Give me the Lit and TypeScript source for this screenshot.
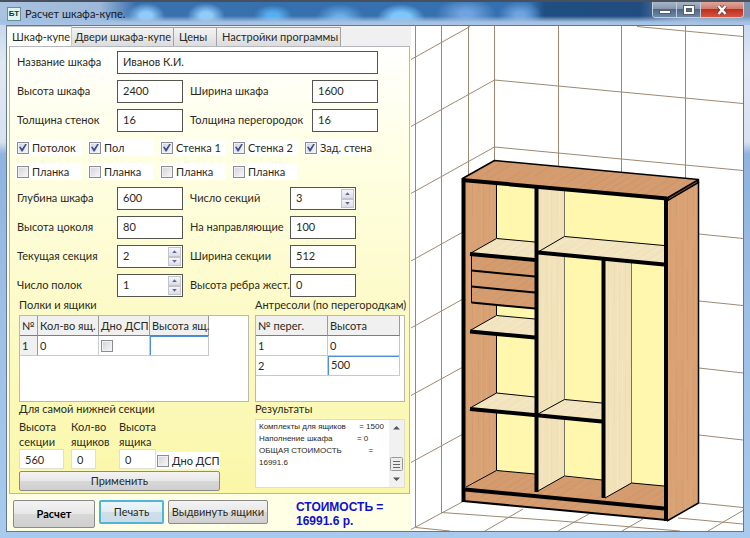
import { LitElement, html, css, svg } from "lit";
import { customElement, property } from "lit/decorators.js";
import { classMap } from "lit/directives/class-map.js";

const controls = css`
  * { box-sizing: border-box; }
  input, button, textarea { font: inherit; color: inherit; margin: 0; border-radius: 0; }
  .tick {
    appearance: none; flex: none; width: 12px; height: 12px;
    border: 1px solid #8b8d90; background: linear-gradient(135deg, #cfd3d8, #f8f8f8);
    box-shadow: inset 0 0 0 1px #f1f1f1; display: grid; place-items: center;
  }
  .tick:checked::before {
    content: ""; width: 8px; height: 8px; background: #3b4c9b;
    clip-path: polygon(0 45%, 18% 38%, 38% 66%, 82% 0, 100% 4%, 46% 100%, 32% 100%);
  }
  .check {
    display: flex; align-items: center; gap: 3px; height: 17px;
    padding-left: 1px; background: #fff; white-space: nowrap;
  }
`;

@customElement("spin-box")
class SpinBox extends LitElement {
  static styles = [controls, css`
    :host { display: block; }
    .box { display: flex; height: 23px; border: 1px solid #55554f; background: #fff; }
    .value { flex: 1; width: 0; border: 0; padding: 0 5px 2px; outline: 0; background: none; }
    .steps { flex: none; display: flex; flex-direction: column; width: 15px; padding: 1px; }
    .step {
      flex: 1; padding: 0; border: 1px solid #c3c3cc; background: linear-gradient(#f6f6f8, #dcdce4);
      display: grid; place-items: center;
    }
    .step::before { content: ""; width: 5px; height: 3px; background: #5767a5; clip-path: polygon(50% 0, 100% 100%, 0 100%); }
    .down::before { clip-path: polygon(0 0, 100% 0, 50% 100%); }
  `];
  @property() value = "";
  @property() label = "";
  render() {
    return html`<div class="box">
      <input class="value" type="text" aria-label=${this.label} .value=${this.value}>
      <span class="steps">
        <button class="step" aria-label="+"></button>
        <button class="step down" aria-label="−"></button>
      </span>
    </div>`;
  }
}

type Pt = [number, number];
const pts = (p: Pt[]) => p.map((q) => q.join(",")).join(" ");

const gridLines: [number, number, number, number][] = [
  [415.5, 26, 415.5, 527], [441.5, 26, 441.5, 513], [468.5, 26, 468.5, 180], [494.5, 26, 494.5, 165],
  [558.5, 26, 558.5, 170], [621.5, 26, 621.5, 175], [685.5, 26, 685.5, 182],
  [411, 59.5, 470, 26.5], [411, 126.5, 494.5, 80], [411, 193.5, 494.5, 147],
  [411, 261, 463, 232], [411, 328, 463, 299], [411, 395.5, 463, 367], [411, 462.5, 463, 434], [411, 529.5, 463, 501.5],
  [637, 26.5, 743, 36.5], [494.5, 80, 743, 103.5], [494.5, 147, 743, 170.5],
  [699, 234, 743, 238.5], [699, 301, 743, 305.5], [699, 368, 743, 373], [699, 435, 743, 440], [699, 503, 743, 507.5],
  [441.5, 512.5, 560, 521], [560, 521, 680, 531], [678, 518, 743, 524], [415.5, 527.5, 450, 531],
  [523, 509, 485, 531], [589, 514, 558, 531], [643, 519, 622, 531], [743, 510.5, 708, 531],
];

const faces: { cls: string; p: Pt[] }[] = [
  { cls: "back", p: [[496.5, 180], [666, 198], [666, 488], [496.5, 471]] },
  { cls: "wood", p: [[466, 487], [496.5, 470.5], [664, 486], [664, 508], [466, 490]] },
  { cls: "side", p: [[465, 181], [496.5, 184], [496.5, 470.5], [465, 487]] },
  { cls: "pale", p: [[538, 187], [564.5, 190], [564.5, 476], [538, 491]] },
  { cls: "pale", p: [[605, 259], [631.5, 261], [631.5, 483], [605, 498]] },
  { cls: "shelf", p: [[471, 253], [496.5, 238.5], [535, 242], [535, 259]] },
  { cls: "shelf", p: [[471, 330], [496.5, 315.5], [535, 319], [535, 336]] },
  { cls: "shelf", p: [[471, 407.5], [496.5, 393], [535, 397], [535, 413]] },
  { cls: "shelf", p: [[538, 252], [564.5, 236.5], [664, 245.5], [664, 264]] },
  { cls: "shelf", p: [[538, 414], [564.5, 399.5], [602, 403], [602, 420]] },
  { cls: "wood", p: [[471.5, 256], [535, 262], [535, 309], [471.5, 303]] },
  { cls: "wood", p: [[462.5, 178.5], [494.5, 160.5], [698.5, 179.5], [667, 198.5]] },
  { cls: "side", p: [[668, 199], [698.5, 181], [698.5, 503], [668, 520.5]] },
  { cls: "wood", p: [[465, 491], [664, 510], [664, 519], [465, 501]] },
];

const edges: { w: number; p: Pt[] }[] = [
  { w: 1, p: [[496.5, 184], [496.5, 238]] }, { w: 1, p: [[496.5, 306], [496.5, 315]] },
  { w: 1, p: [[496.5, 336], [496.5, 393]] }, { w: 1, p: [[496.5, 413], [496.5, 470]] },
  { w: 1, p: [[466, 487], [496.5, 470.5], [535, 474]] },
  { w: 1, p: [[538, 491], [564.5, 476], [602, 480]] },
  { w: 1, p: [[605, 498], [631.5, 483], [664, 486]] },
  { w: 1, p: [[471, 253], [496.5, 238.5], [535, 242]] },
  { w: 1, p: [[471, 330], [496.5, 315.5], [535, 319]] },
  { w: 1, p: [[471, 407.5], [496.5, 393], [535, 397]] },
  { w: 1, p: [[538, 252], [564.5, 236.5], [664, 245.5]] },
  { w: 1, p: [[538, 414], [564.5, 399.5], [602, 403]] },
  { w: 1, p: [[471.5, 256], [471.5, 303]] },
  { w: 2, p: [[471.5, 270.5], [535, 276.5]] }, { w: 2, p: [[471.5, 286.5], [535, 292.5]] }, { w: 2, p: [[471.5, 302.5], [535, 308.5]] },
  { w: 4, p: [[470, 254], [535, 260]] }, { w: 4, p: [[470, 331.5], [535, 337.5]] },
  { w: 4, p: [[470, 409], [602, 421.5]] }, { w: 4, p: [[538, 252.5], [664, 264.5]] },
  { w: 1.5, p: [[462.5, 178.5], [494.5, 160.5], [698.5, 179.5], [698.5, 503], [667, 521]] },
  { w: 4, p: [[666, 200], [698.5, 181]] },
  { w: 2, p: [[463, 501], [667, 520]] },
  { w: 4, p: [[465, 489.5], [664, 508.5]] },
  { w: 4, p: [[462, 180], [667, 198.5]] },
  { w: 4, p: [[463.5, 178], [463.5, 502]] },
  { w: 4, p: [[536.5, 187], [536.5, 492]] },
  { w: 4, p: [[603.5, 259], [603.5, 498]] },
  { w: 4, p: [[666, 198], [666, 521]] },
];

@customElement("wardrobe-view")
class WardrobeView extends LitElement {
  static styles = css`
    :host { display: block; background: #fff; overflow: hidden; }
    .view { display: block; width: 100%; height: auto; }
    .grid { stroke: #9d8972; stroke-width: 1; }
    .thin { stroke: #777265; stroke-width: 1; }
    .inner { stroke: #7a5238; stroke-width: 1; }
    .edge { fill: none; stroke: #000; stroke-linejoin: round; }
    .back { fill: #fff7ae; }
    .wood { fill: url(#wood); }
    .side { fill: url(#side); }
    .pale { fill: url(#pale); }
    .shelf { fill: url(#shelf); }
  `;
  private grain(id: string, base: string, dark: string, light: string, turn: number) {
    return svg`<pattern id=${id} width="17" height="120" patternUnits="userSpaceOnUse" patternTransform=${`rotate(${turn})`}>
      <rect width="17" height="120" fill=${base}></rect>
      <path d="M2.5 0V70M7.5 30V120M13.5 10V96" stroke=${dark} stroke-opacity=".4"></path>
      <path d="M5.5 0V120M10.5 0V60M15.5 50V120" stroke=${light} stroke-opacity=".5"></path>
    </pattern>`;
  }
  render() {
    return html`<svg class="view" viewBox="411 26 332 505" role="img" aria-label="Шкаф-купе">
      <defs>
        ${this.grain("wood", "#d39b6e", "#c58d60", "#d9a377", 58)}
        ${this.grain("side", "#d9a274", "#cd9668", "#dfaa7e", 0)}
        ${this.grain("pale", "#f1e2ba", "#e8d7ad", "#f6eac8", 0)}
        ${this.grain("shelf", "#f2e4bf", "#e9d9b1", "#f8edcf", 58)}
      </defs>
      ${gridLines.map(([a, b, c, d]) => svg`<line class="grid" x1=${a} y1=${b} x2=${c} y2=${d}></line>`)}
      ${faces.map((f) => svg`<polygon class=${f.cls} points=${pts(f.p)}></polygon>`)}
      <path class="thin" d="M564.5 190V236M564.5 256V399M564.5 418V476M631.5 262V483"></path>
      ${edges.map((e) => svg`<polyline class="edge" stroke-width=${e.w} points=${pts(e.p)}></polyline>`)}
      <path class="inner" d="M669 198.500L697 182"></path>
    </svg>`;
  }
}

@customElement("app-root")
class AppRoot extends LitElement {
  static styles = [controls, css`
    :host {
      display: block; font: 11px/16px Lato, "Open Sans", sans-serif; color: #2a2a22;
    }
    .window {
      min-height: 100vh; display: flex; flex-direction: column; padding: 0 6px 6px;
      background: linear-gradient(#b9cfe8, #dfe8f3 60px, #d8e2ef 140px, #8fb2df 152px, #9fc0e6 60%, #a9caef);
      border-top: 2px solid #46505f; border-bottom: 1px solid #39485a;
    }
    .title {
      display: flex; align-items: center; height: 23px; margin: 0 -6px; padding-left: 7px; gap: 4px; color: #151c26;
      background:
        linear-gradient(transparent 14px, #a3c0e2 20px, #a9c5e6),
        radial-gradient(ellipse 19px 13px at 146px 14px, #8fccfb 30%, transparent),
        radial-gradient(ellipse 19px 13px at 206px 14px, #8fccfb 30%, transparent),
        radial-gradient(ellipse 19px 11px at 273px 14px, #55aef0 30%, transparent),
        radial-gradient(ellipse 24px 14px at 340px 16px, #6aaee9 20%, transparent),
        radial-gradient(ellipse 24px 14px at 401px 16px, #7cc6fb 40%, transparent),
        radial-gradient(ellipse 30px 16px at 466px 12px, #6fa3df 20%, transparent),
        radial-gradient(ellipse 22px 14px at 520px 13px, #6fa3df 20%, transparent),
        linear-gradient(90deg, #a9c3e0, #9db8d8 100px, #3a70ae 136px, #3470b0 530px, #1f4e80 545px, #214c7f 640px, #8ea3bd 690px, #7c92ae);
    }
    .logo {
      width: 14px; height: 14px; border: 1px solid #6d8f94; background: #dff3ef; color: #16352f;
      font: bold 8px/12px "Liberation Sans", sans-serif; text-align: center;
    }
    .name { flex: 1; margin: 0; font: inherit; }
    .caption { display: flex; align-self: flex-start; margin-right: 6px; border: 1px solid #c3cedb; border-top: 0; border-radius: 0 0 4px 4px; overflow: hidden; }
    .cap { width: 24px; height: 15px; padding: 0; border: 0; border-right: 1px solid #c3cedb; display: grid; place-items: center; background: linear-gradient(#a9b6c7, #8395ad 48%, #4f6788 50%, #7088a8); }
    .close { width: 42px; border: 0; background: linear-gradient(#e0a79c, #d2776a 48%, #bd2f20 50%, #d4553f); }
    .capicon { display: block; width: 14px; height: 12px; }
    .client {
      flex: 1; display: grid; grid-template-columns: minmax(404px, 54%) 1fr; border: 1px solid #66788e; background: #fff;
    }
    .panel { display: flex; flex-direction: column; background: #ffffe6; }
    .tabs { display: flex; height: 20px; background: #f0f0f0; align-items: flex-end; }
    .tab {
      height: 19px; padding: 0 3px; border: 1px solid #a2a2a2; border-left: 0; border-bottom: 0; text-align: left;
      background: linear-gradient(#f3f3f3, #dcdcdc); white-space: nowrap; line-height: 16px;
    }
    .t1 { width: 102px; } .t2 { width: 43px; padding-left: 5px; } .t3 { width: 124px; padding-left: 5px; }
    .t0 { width: 65px; height: 20px; padding-left: 5px; background: #fff; border-color: #c6c6c6; }
    .page {
      margin: 0 1px 0 2px; padding: 4px 4px 2px 7px; border: 1px solid #b5b7bd; flex: none;
      display: flex; flex-direction: column; gap: 6px; background: linear-gradient(#fff, #ffffe4 25%, #fcfac6 60%, #faf7a8);
    }
    .row { display: flex; align-items: center; height: 23px; }
    .lab { width: 100px; padding-bottom: 2px; white-space: nowrap; }
    .second { margin-left: 7px; }
    .wide { width: 122px; }
    .field { width: 66px; height: 23px; padding: 0 5px 2px; border: 1px solid #55554f; background: #fff; outline: 0; }
    .long { width: 261px; }
    .spin { width: 66px; }
    .checks { display: grid; grid-template-columns: repeat(5, 65px); gap: 7px; padding: 1px 0; margin-left: -1px; }
    .lower { display: grid; grid-template-columns: 230px 150px; column-gap: 6px; margin: -5px 0 0 2px; }
    .head { height: 17px; margin: 0; font: inherit; line-height: 14px; white-space: nowrap; }
    .right { text-align: right; }
    .frame { height: 87px; border: 1px solid #b9b9ae; background: #fff; }
    .data { border-collapse: separate; border-spacing: 0; table-layout: fixed; }
    .shelves { width: 189px; } .lofts { width: 144px; }
    .data th, .data td { height: 20px; padding: 0 2px; font-weight: normal; text-align: left; border-right: 1px solid #c9c9c9; border-bottom: 1px solid #c9c9c9; white-space: nowrap; line-height: 16px; }
    .data th { background: #f0f0f0; border-bottom-color: #7d7d7d; border-right-color: #9a9a9a; }
    .data td.num { background: #f0f0f0; border-right-color: #9a9a9a; }
    .data td.active { padding: 0; box-shadow: inset 1px 1px #4f8fd9; }
    .data .tick { display: grid; }
    .cell { display: block; width: 100%; height: 18px; padding: 0 3px 2px; border: 0; outline: 0; background: none; }
    .c18 { width: 18px; } .c61 { width: 61px; } .c51 { width: 51px; } .c59 { width: 59px; } .c72 { width: 72px; }
    .bottom { display: grid; grid-template-columns: 52px 48px 37px auto; align-items: end; row-gap: 2px; width: 199px; }
    .item { display: block; line-height: 15px; }
    .small { display: block; height: 20px; padding: 0 5px; border: 1px solid #e0e0d0; background: #fff; outline: 0; }
    .w45 { width: 45px; } .w25 { width: 25px; } .w37 { width: 37px; }
    .btn { border: 1px solid #8a8a8a; border-radius: 2px; background: linear-gradient(#f3f3f3, #e8e8e8 48%, #d8d8d8 52%, #cfcfcf); padding: 0; height: 24px; white-space: nowrap; }
    .apply { grid-column: 1 / -1; height: 20px; line-height: 16px; }
    .results { display: flex; height: 69px; border: 1px solid #dedecb; background: #fff; }
    .log { flex: 1; width: 0; border: 0; padding: 1px 3px; resize: none; overflow: hidden; outline: 0; background: none; font: 8px/12px "Liberation Sans", sans-serif; white-space: pre; }
    .bar { width: 15px; background: #f1f1f1; display: block; }
    .foot { flex: 1; display: flex; align-items: flex-start; padding: 6px 6px 3px; gap: 4px; }
    .calc { width: 82px; height: 28px; font-weight: bold; color: #000; }
    .print { width: 65px; border: 2px solid #4fb6d8; background: linear-gradient(#eef5f9, #e2edf3 48%, #cfdfe9 52%, #cbdce6); }
    .pull { width: 100px; }
    .cost { margin: 0 0 0 24px; font: bold 12px/14px "Liberation Sans", sans-serif; color: #1010d0; white-space: pre; }
  `];

  private field(id: string, label: string, value: string, o: { spin?: boolean; second?: boolean; wide?: boolean; long?: boolean } = {}) {
    return html`<label class=${classMap({ lab: true, second: !!o.second, wide: !!o.wide })} for=${id}>${label}</label>
      ${o.spin
        ? html`<spin-box class="spin" id=${id} .value=${value} .label=${label}></spin-box>`
        : html`<input class=${classMap({ field: true, long: !!o.long })} id=${id} type="text" .value=${value}>`}`;
  }
  private check(label: string, on = false) {
    return html`<label class="check"><input class="tick" type="checkbox" .checked=${on}>${label}</label>`;
  }
  render() {
    return html`<main class="window">
      <header class="title">
        <span class="logo">БТ</span>
        <h1 class="name">Расчет шкафа-купе.</h1>
        <div class="caption">
          <button class="cap" aria-label="Свернуть"><svg class="capicon" viewBox="0 0 14 12"><rect x="1.500" y="6.500" width="11" height="3" fill="#fff" stroke="#53606f"></rect></svg></button>
          <button class="cap" aria-label="Развернуть"><svg class="capicon" viewBox="0 0 14 12"><rect x="3" y="3" width="8" height="6" fill="none" stroke="#53606f" stroke-width="4"></rect><rect x="3" y="3" width="8" height="6" fill="none" stroke="#fff" stroke-width="2"></rect></svg></button>
          <button class="cap close" aria-label="Закрыть"><svg class="capicon" viewBox="0 0 14 12"><path d="M3.500 2L10.500 10M10.500 2L3.500 10" stroke="#6b3a3a" stroke-width="4"></path><path d="M3.500 2L10.500 10M10.500 2L3.500 10" stroke="#fff" stroke-width="2.500"></path></svg></button>
        </div>
      </header>
      <div class="client">
        <section class="panel">
          <nav class="tabs" role="tablist">
            ${["Шкаф-купе", "Двери шкафа-купе", "Цены", "Настройки программы"].map((t, i) =>
              html`<button class="tab t${i}" role="tab" aria-selected=${i === 0}>${t}</button>`)}
          </nav>
          <form class="page" @submit=${(e: Event) => e.preventDefault()}>
            <div class="row">${this.field("name", "Название шкафа", "Иванов К.И.", { long: true })}</div>
            <div class="row">${this.field("h", "Высота шкафа", "2400")}${this.field("w", "Ширина шкафа", "1600", { second: true, wide: true })}</div>
            <div class="row">${this.field("tw", "Толщина стенок", "16")}${this.field("tp", "Толщина перегородок", "16", { second: true, wide: true })}</div>
            <div class="checks">
              ${["Потолок", "Пол", "Стенка 1", "Стенка 2", "Зад. стена"].map((l) => this.check(l, true))}
              ${[1, 2, 3, 4].map(() => this.check("Планка"))}
            </div>
            <div class="row">${this.field("d", "Глубина шкафа", "600")}${this.field("n", "Число секций", "3", { second: true, spin: true })}</div>
            <div class="row">${this.field("pl", "Высота цоколя", "80")}${this.field("gd", "На направляющие", "100", { second: true })}</div>
            <div class="row">${this.field("cur", "Текущая секция", "2", { spin: true })}${this.field("sw", "Ширина секции", "512", { second: true })}</div>
            <div class="row">${this.field("sh", "Число полок", "1", { spin: true })}${this.field("rb", "Высота ребра жест.", "0", { second: true })}</div>
            <div class="lower">
              <h2 class="head">Полки и ящики</h2>
              <h2 class="head right">Антресоли (по перегородкам)</h2>
              <div class="frame">
                <table class="data shelves">
                  <colgroup><col class="c18"><col class="c61"><col class="c51"><col class="c59"></colgroup>
                  <thead><tr><th>№</th><th>Кол-во ящ.</th><th>Дно ДСП</th><th>Высота ящ.</th></tr></thead>
                  <tbody><tr><td class="num">1</td><td>0</td><td><input class="tick" type="checkbox" aria-label="Дно ДСП"></td><td class="active"><input class="cell" type="text" aria-label="Высота ящ."></td></tr></tbody>
                </table>
              </div>
              <div class="frame">
                <table class="data lofts">
                  <colgroup><col class="c72"><col class="c72"></colgroup>
                  <thead><tr><th>№ перег.</th><th>Высота</th></tr></thead>
                  <tbody><tr><td>1</td><td>0</td></tr>
                  <tr><td>2</td><td class="active"><input class="cell" type="text" aria-label="Высота" value="500"></td></tr></tbody>
                </table>
              </div>
              <h2 class="head">Для самой нижней секции</h2>
              <h2 class="head">Результаты</h2>
              <div class="bottom">
                <label class="item">Высота<br>секции<input class="small w45" type="text" value="560"></label>
                <label class="item">Кол-во<br>ящиков<input class="small w25" type="text" value="0"></label>
                <label class="item">Высота<br>ящика<input class="small w37" type="text" value="0"></label>
                ${this.check("Дно ДСП")}
                <button class="btn apply">Применить</button>
              </div>
              <div class="results">
                <textarea class="log" aria-label="Результаты" readonly .value=${
                  "Комплекты для ящиков      = 1500\nНаполнение шкафа           = 0\nОБЩАЯ СТОИМОСТЬ            =\n16991.6"}></textarea>
                <svg class="bar" viewBox="0 0 15 67" aria-hidden="true">
                  <path d="M4 9.500L7.500 6L11 9.500ZM4 57.500L7.500 61L11 57.500Z" fill="#555"></path>
                  <rect x="1.500" y="37.500" width="12" height="13" rx="1" fill="#ececec" stroke="#999"></rect>
                  <path d="M4 41.500H11M4 44.500H11M4 47.500H11" stroke="#666"></path>
                </svg>
              </div>
            </div>
          </form>
          <footer class="foot">
            <button class="btn calc">Расчет</button>
            <button class="btn print">Печать</button>
            <button class="btn pull">Выдвинуть ящики</button>
            <p class="cost">СТОИМОСТЬ =
16991.6 р.</p>
          </footer>
        </section>
        <wardrobe-view></wardrobe-view>
      </div>
    </main>`;
  }
}
